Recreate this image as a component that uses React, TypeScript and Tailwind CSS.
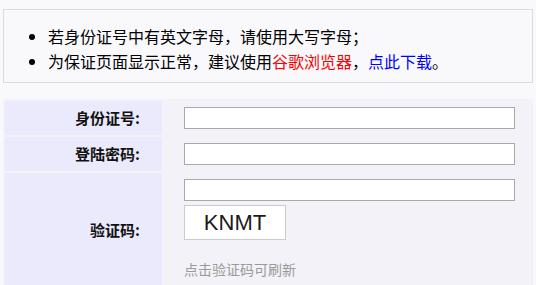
import React from "react";

const cjk = "font-['Noto_Sans_CJK_SC','Noto_Sans',sans-serif]";

const Row: React.FC<{ label: string; children: React.ReactNode; tall?: boolean }> = ({
  label,
  children,
  tall,
}) => (
  <>
    <div
      className={`bg-[#eaeafc] flex items-center justify-end pr-[22px] text-[15px] font-bold text-[#111] ${
        tall ? "h-[114px]" : "h-[34px]"
      }`}
    >
      {label}
    </div>
    <div className="pl-[20px] pt-[6px]">{children}</div>
  </>
);

const App: React.FC = () => {
  return (
    <div className={`min-h-screen bg-[#f9f9fb] pt-[9px] ${cjk}`}>
      <div className="mx-[3px] border border-[#dadada] bg-[#f9f9fb] pt-[14px] pb-[8px]">
        <ul className="list-disc pl-[44px] text-[16px] leading-[25px] text-black">
          <li>若身份证号中有英文字母，请使用大写字母；</li>
          <li>
            为保证页面显示正常，建议使用
            <span className="text-[#ff0000]">谷歌浏览器</span>，
            <a href="#" className="text-[#0000ff]">
              点此下载
            </a>
            。
          </li>
        </ul>
      </div>

      <div className="mx-[3px] mt-[16px] grid grid-cols-[157px_1fr] gap-[2px] bg-[#f2f2f8] p-[2px]">
        <Row label="身份证号:">
          <input className="block h-[22px] w-[331px] border border-[#a9a9a9] bg-white" />
        </Row>
        <Row label="登陆密码:">
          <input
            type="password"
            className="block h-[22px] w-[331px] border border-[#a9a9a9] bg-white"
          />
        </Row>
        <Row label="验证码:" tall>
          <input className="block h-[22px] w-[331px] border border-[#a9a9a9] bg-white" />
          <div className="mt-[4px] flex h-[35px] w-[102px] items-center justify-center border border-[#cccccc] bg-white font-['Liberation_Sans',sans-serif] text-[22px] text-[#1a1a1a]">
            KNMT
          </div>
          <p className="mt-[19px] text-[14px] leading-[20px] text-[#9a9a9a]">
            点击验证码可刷新
          </p>
        </Row>
      </div>
    </div>
  );
};

export default App;
